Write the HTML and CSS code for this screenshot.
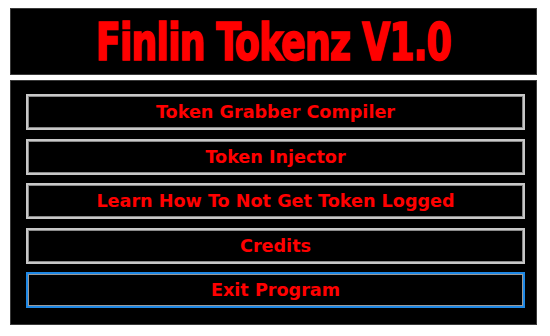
FILE: index.html
```html
<!DOCTYPE html>
<html>
<head>
<meta charset="utf-8">
<link rel="stylesheet" href="styles.css">
</head>
<body>
<div class="app">
  <header class="banner">
    <h1 class="title">Finlin Tokenz V1.0</h1>
  </header>
  <main class="menu">
    <button class="item">Token Grabber Compiler</button>
    <button class="item">Token Injector</button>
    <button class="item">Learn How To Not Get Token Logged</button>
    <button class="item">Credits</button>
    <button class="item focused">Exit Program</button>
  </main>
</div>
</body>
</html>
```

FILE: styles.css
```css
html, body {
  margin: 0;
  padding: 0;
  background: #ffffff;
}
.app {
  width: 527px;
  padding: 8px 0 0 10px;
  display: flex;
  flex-direction: column;
  gap: 5px;
}
.banner {
  height: 67px;
  background: #000;
  border: 1px solid #3a3a3a;
  box-sizing: border-box;
  display: flex;
  align-items: center;
  justify-content: center;
}
.title {
  margin: 0;
  color: #ff0000;
  font-family: Impact, "Liberation Sans Narrow", "DejaVu Sans Condensed", sans-serif;
  font-weight: bold;
  font-size: 48px;
  line-height: 1;
  letter-spacing: -1px;
  -webkit-text-stroke: 1.6px #ff0000;
  transform: scale(0.84, 1.07);
}
.menu {
  height: 245px;
  box-sizing: border-box;
  background: #000;
  border: 1px solid #3a3a3a;
  padding: 13px 11px 0 15px;
  display: flex;
  flex-direction: column;
  gap: 8.5px;
}
.item {
  height: 36px;
  box-sizing: border-box;
  background: #000;
  border: 2px solid #c8c8c8;
  box-shadow: inset 0 0 0 1px #8a8a8a;
  color: #ff0000;
  font-family: "DejaVu Sans", Verdana, sans-serif;
  font-weight: bold;
  font-size: 17.6px;
  padding: 0;
  margin: 0;
}
.item.focused {
  border-color: #1e88e5;
  box-shadow: inset 0 0 0 1px #9a9a9a;
}
```
